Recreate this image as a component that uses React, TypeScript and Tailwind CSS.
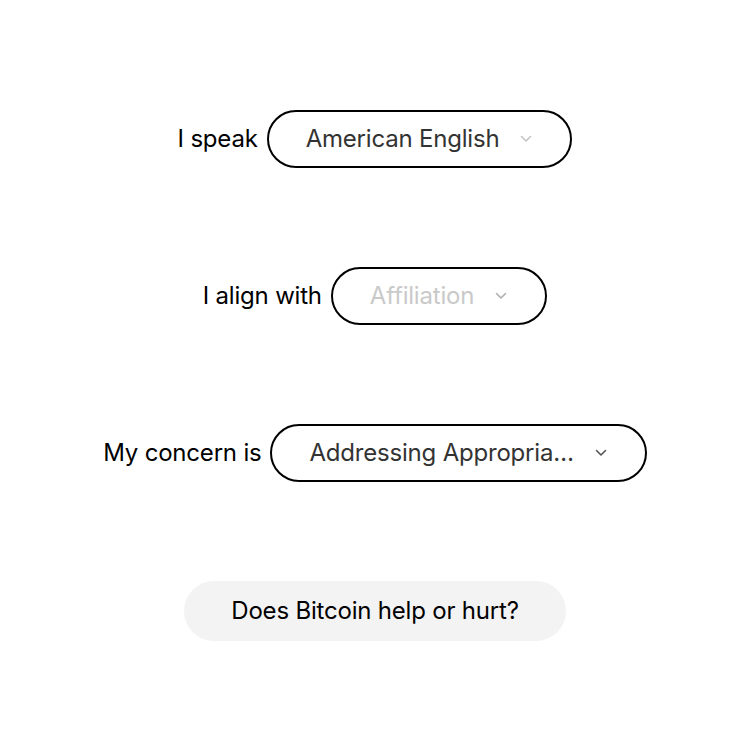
import React from 'react';

const Chevron: React.FC<{ color: string }> = ({ color }) => (
  <svg width="12" height="8" viewBox="0 0 12 8" fill="none" className="shrink-0">
    <path d="M1.5 1.5 L6 6 L10.5 1.5" stroke={color} strokeWidth="1.6" strokeLinecap="round" strokeLinejoin="round" />
  </svg>
);

interface PickerRowProps {
  label: string;
  value: string;
  textClass: string;
  chevronColor: string;
}

const PickerRow: React.FC<PickerRowProps> = ({ label, value, textClass, chevronColor }) => (
  <div className="flex items-center justify-center gap-[9px]">
    <span className="text-[24px] text-black">{label}</span>
    <div className="flex h-[58px] items-center gap-[21px] rounded-full border-2 border-black pl-[37px] pr-[38px]">
      <span className={`text-[24px] ${textClass}`}>{value}</span>
      <Chevron color={chevronColor} />
    </div>
  </div>
);

export default function App() {
  return (
    <div className="flex h-[750px] w-[750px] flex-col items-center justify-center gap-[99px] bg-white font-['Inter',sans-serif] tracking-[-0.2px]">
      <PickerRow label="I speak" value="American English" textClass="text-[#333333]" chevronColor="#c4c4c4" />
      <PickerRow label="I align with" value="Affiliation" textClass="text-[#c9c9c9]" chevronColor="#b0b0b0" />
      <PickerRow label="My concern is" value="Addressing Appropria…" textClass="text-[#333333]" chevronColor="#555555" />
      <button className="flex h-[60px] w-[382px] items-center justify-center rounded-full bg-[#f3f3f3] text-[24px] text-black">
        Does Bitcoin help or hurt?
      </button>
    </div>
  );
}
